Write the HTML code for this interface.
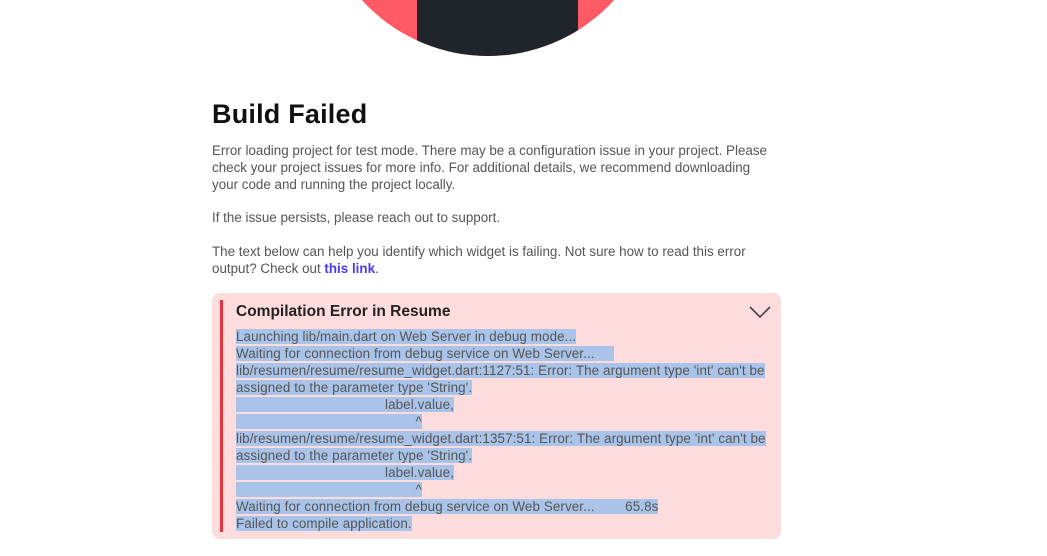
<!DOCTYPE html>
<html><head><style>
body{margin:0;width:1047px;height:556px;background:#fff;font-family:"Liberation Sans",sans-serif;position:relative;overflow:hidden}
.circ{position:absolute;left:318px;top:-284px;width:340px;height:340px;border-radius:50%;background:#fd5a66;overflow:hidden}
.circ .d{position:absolute;left:99px;top:0;width:161px;height:340px;background:#20252c}
h1{position:absolute;left:212px;top:99px;margin:0;font-size:27px;font-weight:bold;color:#111;letter-spacing:0.2px}
.p{position:absolute;left:212px;width:565px;font-size:13.4px;line-height:17px;color:#555;letter-spacing:0}
.p a{color:#4b39ef;font-weight:bold;text-decoration:none}
.box{position:absolute;left:212px;top:293px;width:569px;height:246px;background:#fddcdd;border-radius:8px}
.bar{position:absolute;left:8px;top:7px;width:3px;height:232px;background:#e8333c}
.hd{position:absolute;left:24px;top:10px;font-size:15.5px;font-weight:bold;color:#222;letter-spacing:0}
.code{position:absolute;left:24px;top:35px;font-size:13.4px;line-height:17px;color:#555;letter-spacing:0.1px}
.code span{background:#a9c4e8;white-space:pre}
.chev{position:absolute;right:10px;top:12px}
</style></head><body>
<div class="circ"><div class="d"></div></div>
<h1>Build Failed</h1>
<div class="p" style="top:142px">Error loading project for test mode. There may be a configuration issue in your project. Please check your project issues for more info. For additional details, we recommend downloading your code and running the project locally.</div>
<div class="p" style="top:209px">If the issue persists, please reach out to support.</div>
<div class="p" style="top:243px">The text below can help you identify which widget is failing. Not sure how to read this error output? Check out <a>this link</a>.</div>
<div class="box"><div class="bar"></div>
<div class="hd">Compilation Error in Resume</div>
<svg class="chev" width="22" height="14" viewBox="0 0 22 14"><path d="M1 2 L11 12 L21 2" fill="none" stroke="#444" stroke-width="1.6"/></svg>
<div class="code"><span>Launching lib/main.dart on Web Server in debug mode...</span><br><span>Waiting for connection from debug service on Web Server...     </span><br><span>lib/resumen/resume/resume_widget.dart:1127:51: Error: The argument type 'int' can't be</span><br><span>assigned to the parameter type 'String'.</span><br><span>                                       label.value,</span><br><span>                                               ^</span><br><span>lib/resumen/resume/resume_widget.dart:1357:51: Error: The argument type 'int' can't be</span><br><span>assigned to the parameter type 'String'.</span><br><span>                                       label.value,</span><br><span>                                               ^</span><br><span>Waiting for connection from debug service on Web Server...        65.8s</span><br><span>Failed to compile application.</span></div>
</div>
</body></html>
